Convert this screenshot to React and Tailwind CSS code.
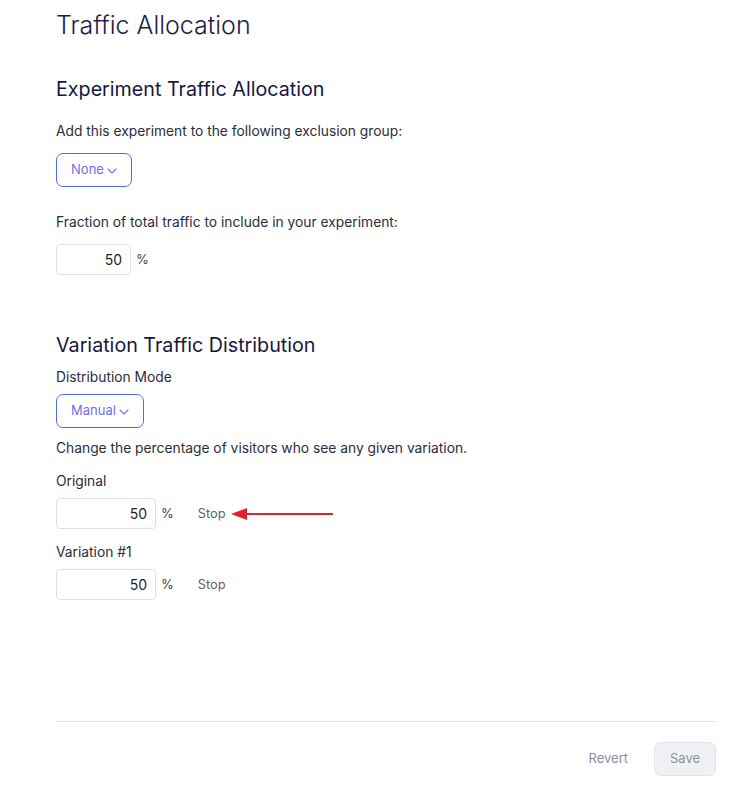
import React, { useState } from 'react';

function Chevron() {
  return (
    <svg width="10" height="6" viewBox="0 0 10 6" fill="none" className="ml-[3px] mt-[2px]">
      <path d="M1 1l4 4 4-4" stroke="currentColor" strokeWidth="1.1" strokeLinecap="round" strokeLinejoin="round" />
    </svg>
  );
}

function Dropdown({ label, width }) {
  return (
    <button className={`flex items-center justify-center h-[34px] ${width} rounded-[7px] border border-[#4f6bf5] text-[13px] text-[#6f6ff2] bg-white`}>
      {label}
      <Chevron />
    </button>
  );
}

function PercentInput({ value, width }) {
  return (
    <div className="flex items-center">
      <input
        className={`h-[31px] ${width} rounded-[4px] border border-[#dcdfe4] text-right pr-[8px] text-[14px] text-[#1e1e2d] outline-none`}
        defaultValue={value}
      />
      <span className="ml-[5px] text-[13px] text-[#3a3f50]">%</span>
    </div>
  );
}

function VariationRow({ name, value, arrow }) {
  return (
    <>
      <div className="mt-[13px] text-[13.8px] leading-[20px] text-[#2b2d3c]">{name}</div>
      <div className="mt-[7px] flex items-center">
        <PercentInput value={value} width="w-[100px]" />
        <span className="ml-[24px] text-[12.8px] text-[#5a6278]">Stop</span>
        {arrow ? (
          <svg width="104" height="14" viewBox="0 0 104 14" className="ml-[5px]">
            <path d="M14 7H102" stroke="#e3202b" strokeWidth="2" />
            <path d="M0 7L16 1V13Z" fill="#e3202b" />
          </svg>
        ) : null}
      </div>
    </>
  );
}

export default function App() {
  const [rows] = useState([
    { name: 'Original', value: 50, arrow: true },
    { name: 'Variation #1', value: 50, arrow: false },
  ]);

  return (
    <div className="w-[736px] min-h-[809px] bg-white pl-[56px] pr-[20px] font-['Inter','Liberation_Sans',sans-serif]">
      <h1 className="pt-[9px] text-[25px] leading-[32px] font-light text-[#1d1d47]">Traffic Allocation</h1>

      <h2 className="mt-[34px] text-[19.7px] leading-[28px] text-[#16173f]">Experiment Traffic Allocation</h2>
      <p className="mt-[18px] text-[13.8px] leading-[20px] text-[#2b2d3c]">Add this experiment to the following exclusion group:</p>
      <div className="mt-[12px]">
        <Dropdown label="None" width="w-[76px]" />
      </div>
      <p className="mt-[25px] text-[13.8px] leading-[20px] text-[#2b2d3c]">Fraction of total traffic to include in your experiment:</p>
      <div className="mt-[12px]">
        <PercentInput value={50} width="w-[75px]" />
      </div>

      <h2 className="mt-[56px] text-[19.7px] leading-[28px] text-[#16173f]">Variation Traffic Distribution</h2>
      <div className="mt-[8px] text-[13.8px] leading-[20px] text-[#2b2d3c]">Distribution Mode</div>
      <div className="mt-[7px]">
        <Dropdown label="Manual" width="w-[88px]" />
      </div>
      <p className="mt-[10px] text-[13.8px] leading-[20px] text-[#2b2d3c]">Change the percentage of visitors who see any given variation.</p>
      <div className="mt-[2px]">
        {rows.map(r => (
          <VariationRow key={r.name} name={r.name} value={r.value} arrow={r.arrow} />
        ))}
      </div>

      <div className="mt-[121px] border-t border-[#e3e5e9]" />
      <div className="mt-[20px] flex items-center justify-end gap-[26px]">
        <button className="text-[13px] text-[#8a8f9e]">Revert</button>
        <button className="h-[34px] w-[62px] rounded-[7px] border border-[#e0e3e8] bg-[#eff1f4] text-[13px] text-[#8d93a0]">Save</button>
      </div>
    </div>
  );
}
